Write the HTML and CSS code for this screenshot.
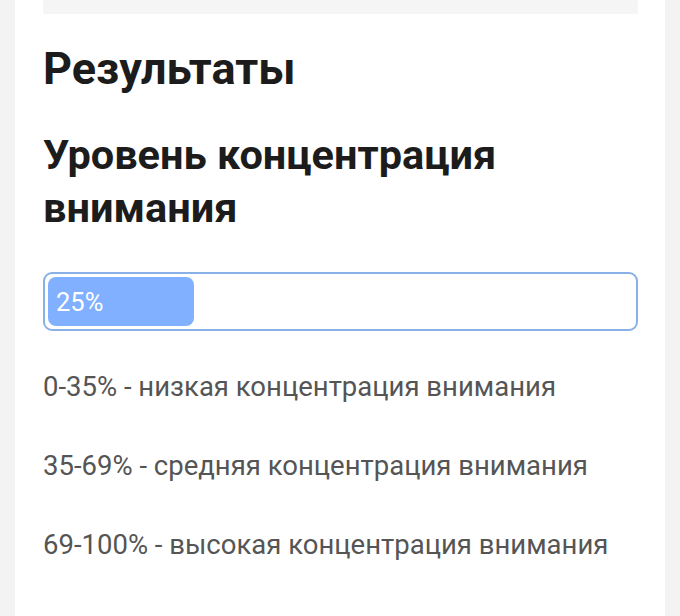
FILE: index.html
```html
<!DOCTYPE html>
<html lang="ru">
<head>
<meta charset="utf-8">
<link rel="stylesheet" href="styles.css">
</head>
<body>
<div class="card">
  <div class="top-box"></div>
  <h1 class="title">Результаты</h1>
  <h2 class="subtitle">Уровень концентрация внимания</h2>
  <div class="progress">
    <div class="progress-fill" style="width:25%">25%</div>
  </div>
  <p class="range">0-35% - низкая концентрация внимания</p>
  <p class="range">35-69% - средняя концентрация внимания</p>
  <p class="range">69-100% - высокая концентрация внимания</p>
</div>
</body>
</html>
```
FILE: styles.css
```css
html, body {
  margin: 0;
  padding: 0;
  background: #f3f3f3;
  font-family: Roboto, "Noto Sans", sans-serif;
}
.card {
  margin: 0 15px;
  background: #ffffff;
  min-height: 616px;
  padding: 0 27px 0 28px;
  box-sizing: border-box;
  display: flex;
  flex-direction: column;
}
.top-box {
  height: 14px;
  background: #f5f5f5;
}
.title {
  margin: 29px 0 0;
  font-size: 45px;
  line-height: 52px;
  font-weight: 700;
  color: #1c1c1c;
}
.subtitle {
  margin: 33px 0 0;
  font-size: 41.5px;
  line-height: 53px;
  font-weight: 700;
  color: #1c1c1c;
}
.progress {
  margin-top: 38px;
  height: 59px;
  border: 2px solid #8ab0e8;
  border-radius: 9px;
  box-sizing: border-box;
  padding: 3px;
}
.progress-fill {
  height: 100%;
  background: #80b0ff;
  border-radius: 8px;
  color: #ffffff;
  font-size: 25.5px;
  display: flex;
  align-items: center;
  padding-left: 8px;
  box-sizing: border-box;
}
.range {
  margin: 36px 0 0;
  font-size: 27.5px;
  line-height: 40px;
  color: #555555;
}
.range + .range {
  margin-top: 39px;
}
```
